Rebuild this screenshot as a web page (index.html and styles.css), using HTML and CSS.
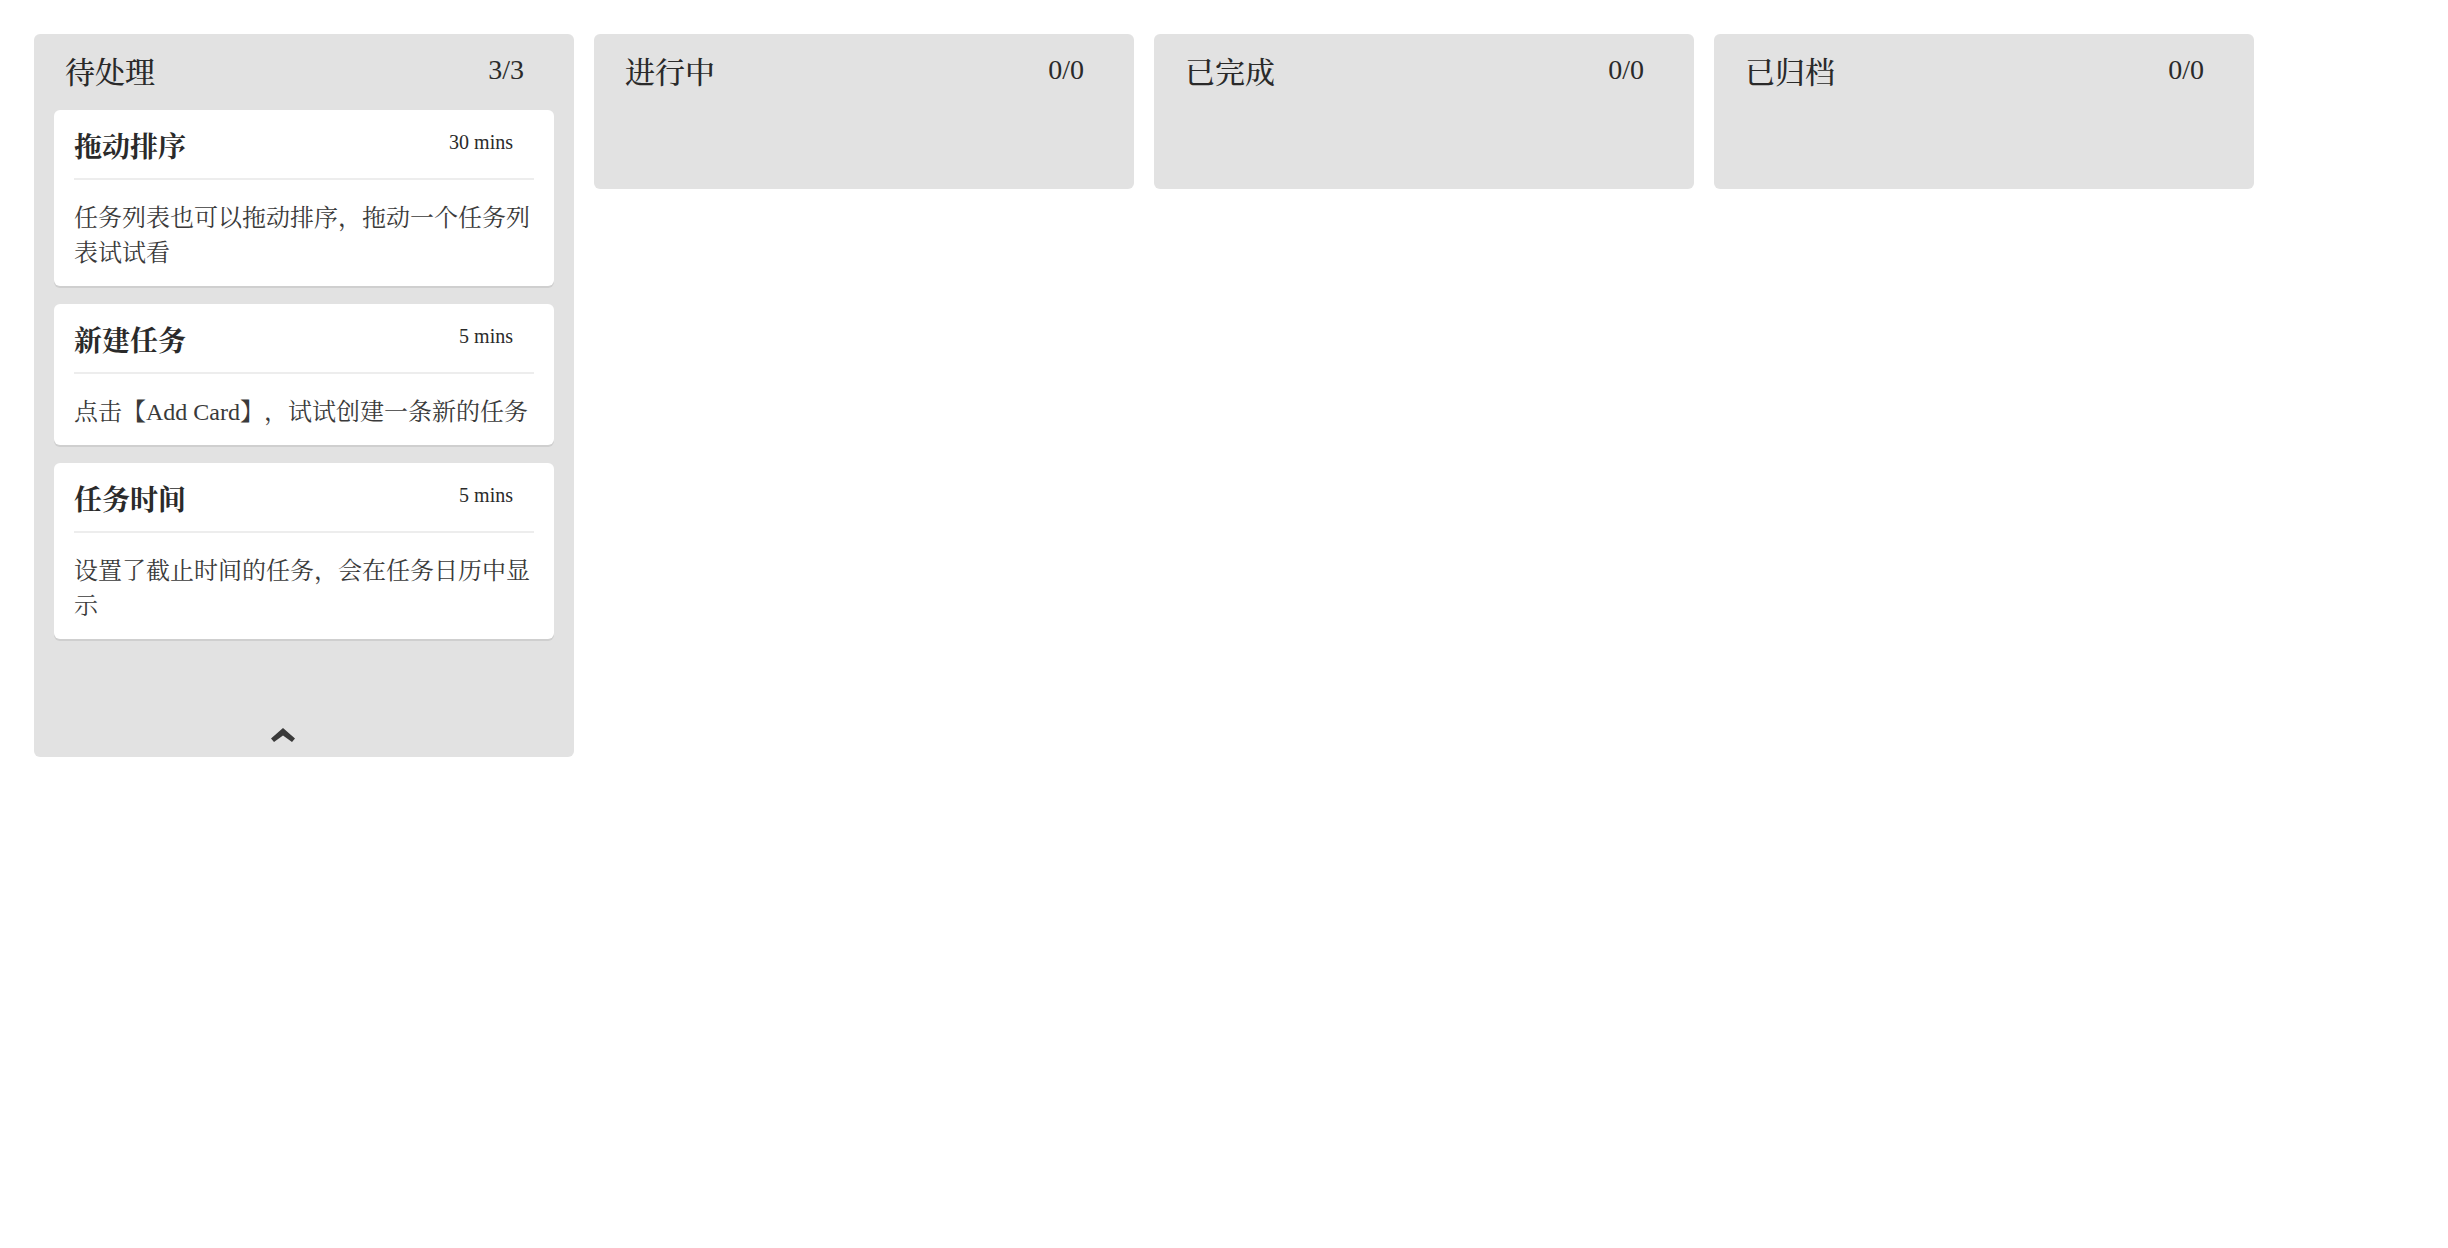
FILE: index.html
```html
<!DOCTYPE html>
<html lang="zh-CN">
<head>
<meta charset="utf-8">
<title>Board</title>
<link rel="stylesheet" href="styles.css">
</head>
<body>
<div class="board">
  <section class="col">
    <header class="col-head">
      <h2 class="col-title">待处理</h2>
      <span class="col-count">3/3</span>
    </header>
    <div class="col-list">
      <article class="card">
        <div class="card-head">
          <h3 class="card-title">拖动排序</h3>
          <span class="card-time">30 mins</span>
        </div>
        <p class="card-body">任务列表也可以拖动排序，拖动一个任务列表试试看</p>
      </article>
      <article class="card">
        <div class="card-head">
          <h3 class="card-title">新建任务</h3>
          <span class="card-time">5 mins</span>
        </div>
        <p class="card-body">点击【Add Card】，试试创建一条新的任务</p>
      </article>
      <article class="card">
        <div class="card-head">
          <h3 class="card-title">任务时间</h3>
          <span class="card-time">5 mins</span>
        </div>
        <p class="card-body">设置了截止时间的任务，会在任务日历中显示</p>
      </article>
    </div>
    <footer class="col-foot">
      <svg class="chevron" width="24" height="14" viewBox="0 0 24 14" aria-hidden="true">
        <polygon points="12,0 24,10.6 21,14 12,7.6 3,14 0,10.6" fill="#3a3a3a"/>
      </svg>
    </footer>
  </section>
  <section class="col">
    <header class="col-head">
      <h2 class="col-title">进行中</h2>
      <span class="col-count">0/0</span>
    </header>
    <div class="col-list"></div>
  </section>
  <section class="col">
    <header class="col-head">
      <h2 class="col-title">已完成</h2>
      <span class="col-count">0/0</span>
    </header>
    <div class="col-list"></div>
  </section>
  <section class="col">
    <header class="col-head">
      <h2 class="col-title">已归档</h2>
      <span class="col-count">0/0</span>
    </header>
    <div class="col-list"></div>
  </section>
</div>
</body>
</html>
```

FILE: styles.css
```css
html, body {
  margin: 0;
  padding: 0;
  background: #ffffff;
}

body {
  font-family: "Liberation Serif", "Noto Serif CJK SC", "Noto Sans CJK SC", serif;
  color: #333333;
  text-spacing-trim: space-all;
}

.board {
  display: flex;
  align-items: flex-start;
  gap: 20px;
  padding: 34px 0 0 34px;
}

.col {
  width: 540px;
  flex: 0 0 540px;
  background: #e2e2e2;
  border-radius: 6px;
  display: flex;
  flex-direction: column;
}

.col-head {
  height: 76px;
  box-sizing: border-box;
  display: flex;
  justify-content: space-between;
  align-items: flex-start;
  padding: 18px 50px 0 31px;
}

.col-title {
  margin: 3px 0 0 0;
  font-size: 30px;
  line-height: 36px;
  font-weight: 500;
  color: #2a2a2a;
}

.col-count {
  font-size: 28px;
  line-height: 36px;
  color: #2a2a2a;
}

.col-list {
  min-height: 79px;
  padding: 0 20px;
  display: flex;
  flex-direction: column;
  gap: 18px;
}

.card {
  background: #ffffff;
  border-radius: 6px;
  box-shadow: 0 2px 0 #cfcfcf;
  padding: 20px 20px 15px;
}

.card-head {
  display: flex;
  justify-content: space-between;
  align-items: flex-start;
  padding-bottom: 13px;
  border-bottom: 2px solid #ededed;
}

.card-title {
  margin: 0;
  font-size: 28px;
  line-height: 35px;
  font-weight: bold;
  color: #2a2a2a;
}

.card-time {
  font-size: 20px;
  line-height: 24px;
  margin-right: 21px;
  color: #2a2a2a;
}

.card-body {
  margin: 0;
  padding-top: 21px;
  font-size: 24px;
  line-height: 35px;
  color: #3a3a3a;
}

.col-foot {
  height: 100px;
  margin-top: 18px;
  display: flex;
  justify-content: center;
  align-items: flex-end;
  padding: 0 43px 15px 0;
  box-sizing: border-box;
}

.chevron {
  display: block;
}
```
